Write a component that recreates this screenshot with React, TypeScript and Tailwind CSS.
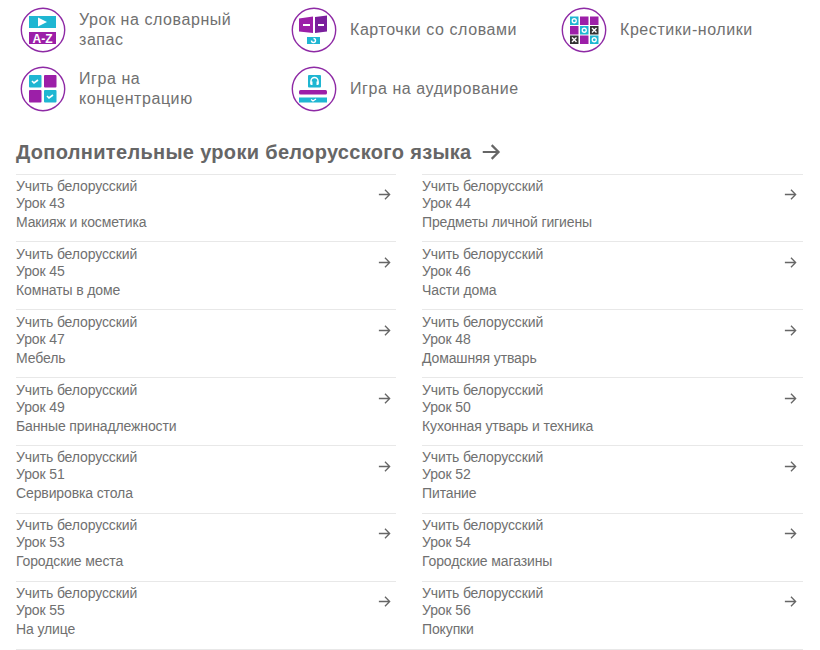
import { ReactNode } from 'react';

const TEAL = '#1fb6d2';
const PURPLE = '#9c1fa8';

const Badge = ({ children }: { children: ReactNode }) => (
    <svg width="46" height="46" viewBox="0 0 46 46" className="shrink-0">
        <circle cx="23" cy="23" r="21.7" fill="#fff" stroke="#8e2aa5" strokeWidth="1.4" />
        {children}
    </svg>
);

const Check = ({ x, y }: { x: number, y: number }) => (
    <path d={`M${x} ${y}l2 2 4-3`} fill="none" stroke="#fff" strokeWidth="1.6" />
);

const VocabIcon = () => (
    <Badge>
        <rect x="9" y="9" width="27" height="12" fill={TEAL} />
        <path d="M18 10.500l9 4.500-9 4.500z" fill="#fff" />
        <rect x="9" y="25" width="27" height="12" fill={PURPLE} />
        <text x="22.500" y="35.500" textAnchor="middle" fontSize="12" fontWeight="700" fill="#fff" fontFamily="Liberation Sans, sans-serif">A-Z</text>
    </Badge>
);

const CardsIcon = () => (
    <Badge>
        <path d="M8 11.500l14-2v16.500l-14-1.500z" fill={PURPLE} />
        <path d="M24 10l12-1.500v16l-12 1.500z" fill="#7a1f9c" />
        <rect x="12" y="17" width="7" height="2" fill="#fff" />
        <rect x="27" y="17" width="6" height="2" fill="#fff" />
        <rect x="16" y="30" width="13" height="7" fill={TEAL} />
        <path d="M20.500 33.500a2 2 0 1 0 2-2" fill="none" stroke="#fff" strokeWidth="1.400" />
    </Badge>
);

const TicTacIcon = () => {
    const cells = ['o', 'p', 'p', 'p', 'o', 'x', 'x', 'p', 'o'];
    return (
        <Badge>
            {cells.map((cell, i) => {
                const x = 9 + (i % 3) * 10;
                const y = 9.5 + Math.floor(i / 3) * 9.5;
                if (cell === 'p') return <rect key={i} x={x} y={y} width="8.500" height="8.500" fill={PURPLE} />;
                if (cell === 'o') return (
                    <g key={i}>
                        <rect x={x} y={y} width="8.500" height="8.500" fill={TEAL} />
                        <circle cx={x + 4.25} cy={y + 4.25} r="2" fill="none" stroke="#fff" strokeWidth="1.300" />
                    </g>
                );
                return (
                    <g key={i}>
                        <rect x={x} y={y} width="8.500" height="8.500" fill="#333" />
                        <path d={`M${x + 2} ${y + 2}l4.500 4.500m0-4.500l-4.500 4.500`} stroke="#fff" strokeWidth="1.400" />
                    </g>
                );
            })}
        </Badge>
    );
};

const ConcentrationIcon = () => (
    <Badge>
        <rect x="9" y="9" width="12.500" height="12.500" rx="1" fill={TEAL} />
        <Check x={12} y={15} />
        <rect x="24" y="9" width="12.500" height="12.500" rx="1" fill={PURPLE} />
        <rect x="9" y="24" width="12.500" height="12.500" rx="1" fill={PURPLE} />
        <rect x="24" y="24" width="12.500" height="12.500" rx="1" fill={TEAL} />
        <Check x={27} y={30} />
    </Badge>
);

const ListeningIcon = () => (
    <Badge>
        <rect x="17" y="9" width="13" height="12.500" rx="1" fill={TEAL} />
        <path d="M20 18v-3a3.500 3.500 0 0 1 7 0v3" fill="none" stroke="#fff" strokeWidth="1.500" />
        <rect x="19.500" y="15.500" width="2" height="3.500" fill="#fff" />
        <rect x="25.500" y="15.500" width="2" height="3.500" fill="#fff" />
        <rect x="8" y="24" width="28" height="4.500" rx="1.500" fill={PURPLE} />
        <rect x="8" y="31.500" width="28" height="5" fill={TEAL} />
        <path d="M20 33.500l2 1.500 3-2" fill="none" stroke="#fff" strokeWidth="1.300" />
    </Badge>
);

const games = [
    { icon: <VocabIcon />, label: <>Урок на словарный<br />запас</> },
    { icon: <CardsIcon />, label: 'Карточки со словами' },
    { icon: <TicTacIcon />, label: 'Крестики-нолики' },
    { icon: <ConcentrationIcon />, label: <>Игра на<br />концентрацию</> },
    { icon: <ListeningIcon />, label: 'Игра на аудирование' },
];

const lessons = [
    [43, 'Макияж и косметика'],
    [44, 'Предметы личной гигиены'],
    [45, 'Комнаты в доме'],
    [46, 'Части дома'],
    [47, 'Мебель'],
    [48, 'Домашняя утварь'],
    [49, 'Банные принадлежности'],
    [50, 'Кухонная утварь и техника'],
    [51, 'Сервировка стола'],
    [52, 'Питание'],
    [53, 'Городские места'],
    [54, 'Городские магазины'],
    [55, 'На улице'],
    [56, 'Покупки'],
] as const;

const Arrow = ({ size, width }: { size: number, width: number }) => (
    <svg width={size} height={size} viewBox="0 0 16 16" fill="none" stroke="#666" strokeWidth={width} className="shrink-0">
        <path d="M2 8h11.500M8.500 3l5 5-5 5" />
    </svg>
);

export default function App() {
    return (
        <div className="h-[650px] w-[820px] overflow-hidden bg-white font-['Liberation_Sans',sans-serif] text-[#707070]">
            <div className="grid grid-cols-[271px_270px_1fr] gap-y-[13px] pl-5 pt-[7px]">
                {games.map((game, i) => (
                    <div key={i} className="flex h-[46px] items-center gap-[13px]">
                        {game.icon}
                        <span className="text-[16px] leading-[20px] tracking-[0.57px]">{game.label}</span>
                    </div>
                ))}
            </div>

            <h2 className="ml-4 mt-[27px] flex h-[26px] items-center gap-2 text-[20px] font-bold leading-[26px] tracking-[0.32px] text-[#666]">
                Дополнительные уроки белорусского языка
                <Arrow size={22} width={1.6} />
            </h2>

            <div className="ml-4 mt-[8.6px] grid w-[787px] grid-cols-[380px_381px] gap-x-[26px] border-b border-[#e8e8e8]">
                {lessons.map(([num, title]) => (
                    <div key={num} className="flex h-[67.9px] items-start justify-between border-t border-[#e8e8e8] pr-[5px] pt-[3.3px] odd:pr-[4px]">
                        <div className="text-[14px] leading-[17px] tracking-[-0.12px]">
                            <div>Учить белорусский</div>
                            <div>Урок {num}</div>
                            <div className="mt-[2px]">{title}</div>
                        </div>
                        <div className="mt-[9.1px]">
                            <Arrow size={15} width={1.4} />
                        </div>
                    </div>
                ))}
            </div>
        </div>
    );
}
